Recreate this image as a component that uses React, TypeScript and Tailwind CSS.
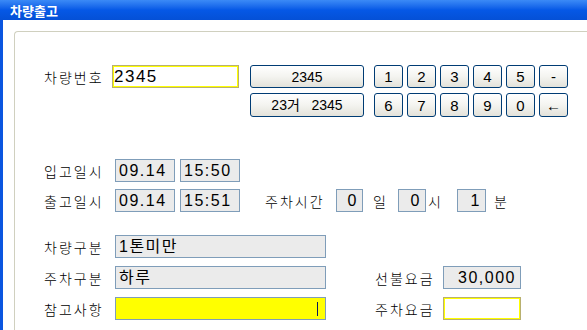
import React from 'react';

const ko = { fontFamily: '"Noto Sans CJK KR", "Liberation Sans", sans-serif' };
const num = { fontFamily: '"Liberation Sans", "Noto Sans CJK KR", sans-serif' };

function XpButton({ label, className = '' }: { label: string; className?: string }) {
  return (
    <button
      style={num}
      className={`flex items-center justify-center rounded-[3px] border border-[#003c74] bg-gradient-to-b from-white via-[#f4f4f0] to-[#e3e2da] text-[14px] leading-none text-black ${className}`}
    >
      {label}
    </button>
  );
}

function Label({ text, className = '' }: { text: string; className?: string }) {
  return (
    <span style={ko} className={`text-[14px] font-light leading-none tracking-[2px] text-black ${className}`}>
      {text}
    </span>
  );
}

function Box({ value, className = '', align = 'left' }: { value: string; className?: string; align?: 'left' | 'right' | 'center' }) {
  const justify = align === 'right' ? 'justify-end pr-[4px]' : align === 'center' ? 'justify-center' : 'justify-start pl-[3px]';
  return (
    <div
      style={num}
      className={`flex h-[23px] items-center border border-[#7f9db9] bg-[#ebebeb] text-[16px] leading-none tracking-[1.5px] text-black ${justify} ${className}`}
    >
      {value}
    </div>
  );
}

export default function App() {
  const keys = ['1', '2', '3', '4', '5', '-', '6', '7', '8', '9', '0', '←'];

  return (
    <div className="flex h-[330px] w-[587px] flex-col overflow-hidden bg-white">
      {/* title bar */}
      <div className="flex h-[20px] items-center bg-gradient-to-b from-[#3b8af6] via-[#0558e6] to-[#0450d6] pl-[10px]">
        <span style={ko} className="text-[13px] font-bold leading-none text-white">
          차량출고
        </span>
      </div>

      <div className="flex flex-1">
        <div className="w-[3px] bg-[#0a56e0]" />

        <div className="flex-1 pl-[11px] pt-[11px]">
          <div className="h-full rounded-tl-[4px] border-l border-t border-[#d0d0bf] pl-[29px] pt-[33px]">
            {/* plate number */}
            <div className="flex items-start">
              <div className="flex h-[23px] w-[68px] items-center">
                <Label text="차량번호" />
              </div>
              <div
                style={num}
                className="flex h-[23px] w-[127px] items-center border border-[#b8b070] bg-white pl-[1px] text-[17px] leading-none tracking-[1.5px] text-black shadow-[inset_0_0_0_1px_#ffff00]"
              >
                2345
              </div>
              <div className="ml-[11px] flex flex-col gap-[5px]">
                <XpButton label="2345" className="h-[23px] w-[114px]" />
                <XpButton label="23거   2345" className="h-[24px] w-[114px] whitespace-pre" />
              </div>
              <div className="ml-[10px] grid grid-cols-[repeat(6,29px)] gap-x-[4px] gap-y-[5px]">
                {keys.map((k, i) => (
                  <XpButton key={i} label={k} className={`${i < 6 ? 'h-[23px]' : 'h-[24px]'} w-[29px] text-[15px]`} />
                ))}
              </div>
            </div>

            {/* in / out times */}
            <div className="mt-[42px] flex flex-col gap-[7px]">
              <div className="flex items-center">
                <Label text="입고일시" className="w-[71px]" />
                <Box value="09.14" className="w-[60px]" />
                <Box value="15:50" className="ml-[5px] w-[60px]" />
              </div>
              <div className="flex items-center">
                <Label text="출고일시" className="w-[71px]" />
                <Box value="09.14" className="w-[60px]" />
                <Box value="15:51" className="ml-[5px] w-[60px]" />
                <Label text="주차시간" className="ml-[25px] w-[71px]" />
                <Box value="0" align="right" className="w-[27px]" />
                <Label text="일" className="ml-[10px] w-[25px]" />
                <Box value="0" align="right" className="w-[28px]" />
                <Label text="시" className="ml-[2px] w-[29px]" />
                <Box value="1" align="right" className="w-[29px]" />
                <Label text="분" className="ml-[8px]" />
              </div>
            </div>

            {/* class / fee */}
            <div className="mt-[23px] flex flex-col gap-[8px]">
              <div className="flex items-center">
                <Label text="차량구분" className="w-[71px]" />
                <Box value="1톤미만" className="w-[211px]" />
              </div>
              <div className="flex items-center">
                <Label text="주차구분" className="w-[71px]" />
                <Box value="하루" className="w-[211px]" />
                <Label text="선불요금" className="ml-[49px] w-[68px]" />
                <Box value="30,000" align="right" className="w-[78px]" />
              </div>
              <div className="flex items-center">
                <Label text="참고사항" className="w-[71px]" />
                <div className="flex h-[23px] w-[211px] items-center justify-end border border-[#7f9db9] bg-[#ffff00] pr-[7px]">
                  <div className="h-[14px] w-[1px] bg-[#0c1a5c]" />
                </div>
                <Label text="주차요금" className="ml-[49px] w-[68px]" />
                <div className="h-[23px] w-[78px] border border-[#b8b070] bg-white shadow-[inset_0_0_0_1px_#ffff00]" />
              </div>
            </div>
          </div>
        </div>
      </div>
    </div>
  );
}
